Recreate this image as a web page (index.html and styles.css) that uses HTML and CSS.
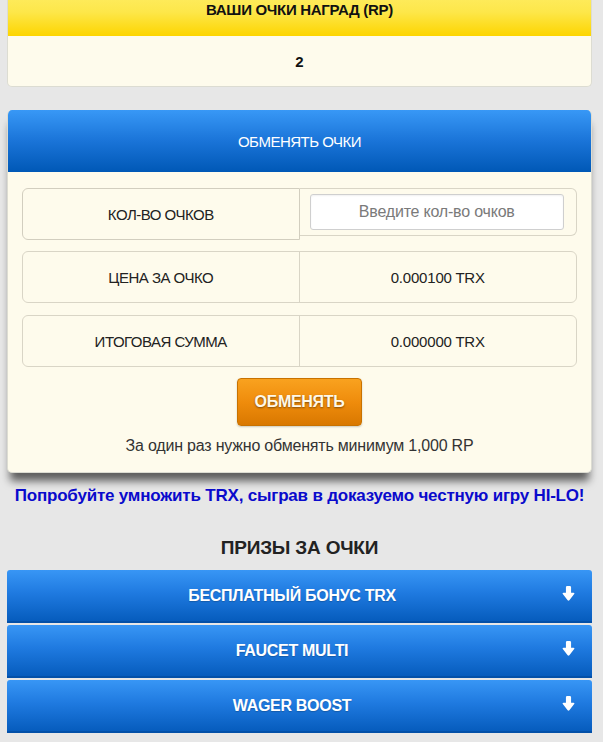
FILE: index.html
```html
<!DOCTYPE html>
<html lang="ru">
<head>
<meta charset="utf-8">
<title>Очки наград</title>
<link rel="stylesheet" href="styles.css">
</head>
<body>
<div class="wrap">
  <section class="card card-rp">
    <div class="rp-head">ВАШИ ОЧКИ НАГРАД (RP)</div>
    <div class="rp-body">2</div>
  </section>

  <section class="card card-exchange">
    <div class="ex-head">ОБМЕНЯТЬ ОЧКИ</div>
    <div class="ex-body">
      <div class="row row-input">
        <div class="cell label tall">КОЛ-ВО ОЧКОВ</div>
        <div class="cell inputcell">
          <input class="field" type="text" placeholder="Введите кол-во очков">
        </div>
      </div>
      <div class="row">
        <div class="cell label">ЦЕНА ЗА ОЧКО</div>
        <div class="cell value">0.000100 TRX</div>
      </div>
      <div class="row">
        <div class="cell label">ИТОГОВАЯ СУММА</div>
        <div class="cell value">0.000000 TRX</div>
      </div>
      <button class="btn-exchange" type="button">ОБМЕНЯТЬ</button>
      <p class="note">За один раз нужно обменять минимум 1,000 RP</p>
    </div>
  </section>

  <p class="promo">Попробуйте умножить TRX, сыграв в доказуемо честную игру HI-LO!</p>

  <h2 class="prizes-title">ПРИЗЫ ЗА ОЧКИ</h2>

  <div class="prizes">
    <div class="prize">БЕСПЛАТНЫЙ БОНУС TRX
      <svg class="arrow" viewBox="0 0 12 14" width="13" height="15"><path d="M3.6 1.2Q3.6 0 4.8 0h2.4q1.2 0 1.2 1.2v5.1h2.3q1.4 0 .6 1.1L6.8 13.2q-.8.9-1.6 0L.7 7.4q-.8-1.1.6-1.1h2.3z" fill="#fff"/></svg>
    </div>
    <div class="prize">FAUCET MULTI
      <svg class="arrow" viewBox="0 0 12 14" width="13" height="15"><path d="M3.6 1.2Q3.6 0 4.8 0h2.4q1.2 0 1.2 1.2v5.1h2.3q1.4 0 .6 1.1L6.8 13.2q-.8.9-1.6 0L.7 7.4q-.8-1.1.6-1.1h2.3z" fill="#fff"/></svg>
    </div>
    <div class="prize">WAGER BOOST
      <svg class="arrow" viewBox="0 0 12 14" width="13" height="15"><path d="M3.6 1.2Q3.6 0 4.8 0h2.4q1.2 0 1.2 1.2v5.1h2.3q1.4 0 .6 1.1L6.8 13.2q-.8.9-1.6 0L.7 7.4q-.8-1.1.6-1.1h2.3z" fill="#fff"/></svg>
    </div>
  </div>
</div>
</body>
</html>
```

FILE: styles.css
```css
* { box-sizing: border-box; }

html, body {
  margin: 0;
  padding: 0;
  background: #e7e7e7;
  font-family: "Liberation Sans", Arial, sans-serif;
  color: #222;
}

.wrap {
  padding: 0 11px 0 7px;
}

.card {
  border-radius: 5px;
  overflow: hidden;
  background: #fefbec;
}

.card-rp {
  margin-top: -24px;
  border: 1px solid #dcdcd2;
  border-top: none;
}

.rp-head {
  height: 60px;
  padding-top: 25px;
  text-align: center;
  font-weight: bold;
  font-size: 15px;
  letter-spacing: -0.3px;
  color: #111;
  background: linear-gradient(to bottom, #fff176 0%, #fde74a 60%, #fdd500 100%);
}

.rp-body {
  height: 50px;
  display: flex;
  align-items: center;
  justify-content: center;
  font-weight: bold;
  font-size: 15px;
  color: #111;
}

.card-exchange {
  margin-top: 23px;
  box-shadow: 0 11px 9px -3px rgba(0, 0, 0, 0.6);
  border: 1px solid #dcdcd2;
  border-top: none;
}

.ex-head {
  height: 62px;
  display: flex;
  align-items: center;
  justify-content: center;
  color: #fff;
  font-size: 15px;
  letter-spacing: -0.5px;
  background: linear-gradient(to bottom, #3898f6 0%, #1a74d8 50%, #0058b6 100%);
}

.ex-body {
  padding: 16px 14px 17px;
  display: flex;
  flex-direction: column;
  align-items: center;
}

.row {
  width: 100%;
  display: flex;
  align-items: flex-start;
  height: 52px;
  border: 1px solid #d9d5c6;
  border-radius: 6px;
  margin-bottom: 12px;
}

.row-input {
  border: none;
  margin-bottom: 11px;
}

.cell {
  flex: 1 1 50%;
  height: 100%;
  display: flex;
  align-items: center;
  justify-content: center;
  font-size: 15px;
  letter-spacing: -0.5px;
  color: #222;
}

.cell.value {
  letter-spacing: -0.2px;
}

.cell.label {
  border-right: 1px solid #d9d5c6;
}

.row-input .cell.label {
  border: 1px solid #d2cebf;
  border-radius: 6px 0 0 6px;
  height: 52px;
}

.cell.inputcell {
  height: 48px;
  border: 1px solid #d9d5c6;
  border-left: none;
  border-radius: 0 6px 6px 0;
  padding: 5px 12px 0 10px;
  align-items: flex-start;
}

.field {
  width: 100%;
  height: 36px;
  border: 1px solid #cfcfcf;
  border-radius: 3px;
  background: #fff;
  font-family: "Liberation Sans", Arial, sans-serif;
  font-size: 16px;
  letter-spacing: -0.2px;
  text-align: center;
  color: #333;
  box-shadow: inset 0 1px 2px rgba(0,0,0,0.06);
}

.field::placeholder {
  color: #7a7a7a;
}

.btn-exchange {
  margin-top: -1px;
  width: 125px;
  height: 48px;
  border: 1px solid #c87200;
  border-radius: 4px;
  background: linear-gradient(to bottom, #f9a21f 0%, #ef8c0c 50%, #d97800 100%);
  color: #fff8e8;
  font-family: "Liberation Sans", Arial, sans-serif;
  font-weight: bold;
  font-size: 16px;
  letter-spacing: -0.3px;
  text-shadow: 0 1px 2px rgba(0,0,0,0.45);
  box-shadow: 0 1px 2px rgba(0,0,0,0.2);
}

.note {
  margin: 11px 0 0;
  font-size: 16px;
  letter-spacing: -0.2px;
  color: #333;
}

.promo {
  margin: 13px 0 0;
  text-align: center;
  font-weight: bold;
  font-size: 17px;
  letter-spacing: -0.2px;
  color: #0a0acc;
}

.prizes-title {
  margin: 31px 0 0;
  text-align: center;
  font-size: 19px;
  font-weight: bold;
  color: #222;
  letter-spacing: -0.2px;
}

.prizes {
  margin-top: 11px;
  display: flex;
  flex-direction: column;
  gap: 2px;
}

.prize {
  position: relative;
  height: 53px;
  display: flex;
  align-items: center;
  justify-content: center;
  padding-right: 15px;
  color: #fff;
  font-weight: bold;
  font-size: 16px;
  letter-spacing: -0.3px;
  border-radius: 3px 3px 0 0;
  background: linear-gradient(to bottom, #3896f5 0%, #1f7ae0 45%, #065cbd 100%);
  border-bottom: 2px solid #0350a8;
  text-shadow: 0 1px 1px rgba(0,0,0,0.2);
}

.arrow {
  position: absolute;
  right: 17px;
  top: 16px;
}
```
